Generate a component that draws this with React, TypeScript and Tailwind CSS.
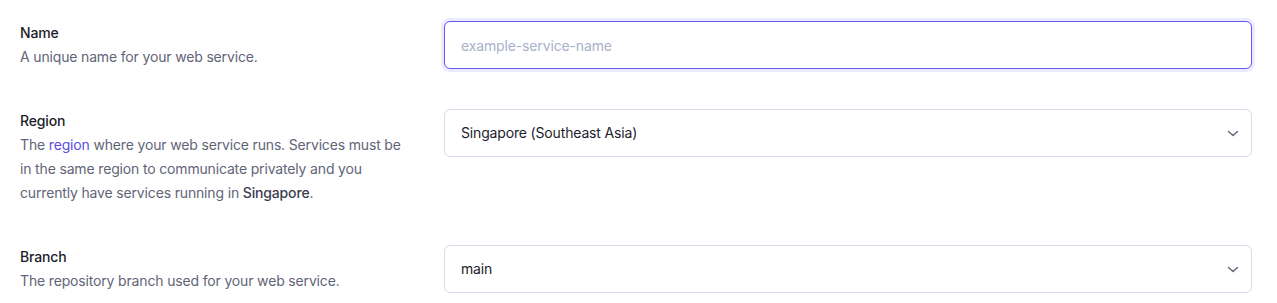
import React from "react";

function Chevron() {
  return (
    <svg width="12" height="12" viewBox="0 0 12 12" fill="none" className="text-[#5f6577]">
      <path d="M1.5 4.5 6 8.5l4.5-4" stroke="currentColor" strokeWidth="1.5" strokeLinecap="round" strokeLinejoin="round" />
    </svg>
  );
}

function SelectBox({ value }: { value: string }) {
  return (
    <div className="flex h-12 items-center justify-between rounded-md border border-[#d5dcea] bg-white pl-4 pr-3 text-sm text-[#1c1d2b]">
      <span>{value}</span>
      <Chevron />
    </div>
  );
}

export default function App() {
  return (
    <div
      className="min-h-[303px] bg-white pl-5 pr-[25px] pt-[21px] tracking-[-0.01em]"
      style={{ fontFamily: "Inter, 'Noto Sans', sans-serif" }}
    >
      <div className="flex flex-col gap-10">
        <div className="flex gap-6">
          <div className="w-[400px] shrink-0 pr-2.5 text-sm leading-6">
            <div className="font-medium text-[#1c1d2b]">Name</div>
            <div className="text-[#5f6577]">A unique name for your web service.</div>
          </div>
          <div className="flex-1">
            <input
              className="h-12 w-full rounded-md border border-[#635bf0] bg-white px-4 text-sm tracking-[-0.01em] text-[#1c1d2b] shadow-[0_0_0_3px_rgba(99,91,240,0.12)] outline-none placeholder:text-[#a9b0cc]"
              placeholder="example-service-name"
            />
          </div>
        </div>
        <div className="flex gap-6">
          <div className="w-[400px] shrink-0 pr-2.5 text-sm leading-6">
            <div className="font-medium text-[#1c1d2b]">Region</div>
            <div className="text-[#5f6577]">
              The <span className="text-[#5b4ee0]">region</span> where your web service runs. Services must be in the same region to communicate privately and you currently have services running in{" "}
              <span className="font-medium text-[#3a3d4d]">Singapore</span>.
            </div>
          </div>
          <div className="flex-1">
            <SelectBox value="Singapore (Southeast Asia)" />
          </div>
        </div>
        <div className="flex gap-6">
          <div className="w-[400px] shrink-0 pr-2.5 text-sm leading-6">
            <div className="font-medium text-[#1c1d2b]">Branch</div>
            <div className="text-[#5f6577]">The repository branch used for your web service.</div>
          </div>
          <div className="flex-1">
            <SelectBox value="main" />
          </div>
        </div>
      </div>
    </div>
  );
}
